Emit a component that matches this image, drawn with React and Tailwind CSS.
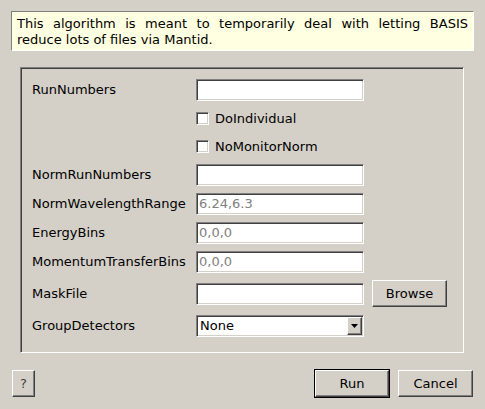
import React from "react";

const sunken =
  "border border-t-[#808080] border-l-[#808080] border-b-white border-r-white [box-shadow:inset_1px_1px_0_#404040,inset_-1px_-1px_0_#d4d0c8]";
const raised =
  "bg-[#d4d0c8] border border-t-white border-l-white border-b-[#404040] border-r-[#404040] [box-shadow:inset_-1px_-1px_0_#808080] flex items-center justify-center";

const Field = ({ value }) => (
  <div className={`h-[22px] w-[168px] bg-white pl-[2px] flex items-center text-[#808080] ${sunken}`}>
    {value}
  </div>
);

const Check = ({ label }) => (
  <div className="col-span-2 h-[21px] flex items-center">
    <div className={`w-[13px] h-[13px] bg-white ${sunken}`} />
    <span className="ml-[6px]">{label}</span>
  </div>
);

const Label = ({ children }) => <div className="h-[22px] flex items-center">{children}</div>;

const App = () => {
  return (
    <div className="w-[485px] h-[409px] bg-[#d4d0c8] pt-[11px] px-[11px] flex flex-col text-[13px] text-black font-['DejaVu_Sans',sans-serif]">
      <div className="w-[463px] h-[40px] bg-[#ffffe1] border border-t-[#808080] border-l-[#808080] border-b-white border-r-white px-[5px] pt-[4px] pb-[2px] leading-[16px] text-justify [text-align-last:left]">
        This algorithm is meant to temporarily deal with letting BASIS reduce lots of files via Mantid.
      </div>

      <div className="mt-[16px] ml-[9px] w-[444px] h-[286px] border border-t-[#808080] border-l-[#808080] border-b-white border-r-white [box-shadow:inset_1px_1px_0_#404040] pt-[11px] pl-[11px]">
        <div className="grid grid-cols-[164px_168px_auto] gap-y-[7px] items-center">
          <Label>RunNumbers</Label>
          <Field value="" />
          <div />
          <div />
          <Check label="DoIndividual" />
          <div />
          <Check label="NoMonitorNorm" />
          <Label>NormRunNumbers</Label>
          <Field value="" />
          <div />
          <Label>NormWavelengthRange</Label>
          <Field value="6.24,6.3" />
          <div />
          <Label>EnergyBins</Label>
          <Field value="0,0,0" />
          <div />
          <Label>MomentumTransferBins</Label>
          <Field value="0,0,0" />
          <div />
          <Label>MaskFile</Label>
          <Field value="" />
          <button className={`ml-[8px] w-[75px] h-[27px] ${raised}`}>Browse</button>
          <div className="mt-[1px]">
            <Label>GroupDetectors</Label>
          </div>
          <div className={`mt-[1px] h-[22px] w-[168px] bg-white flex items-center ${sunken}`}>
            <span className="flex-1 pl-[3px]">None</span>
            <div className={`w-[15px] h-[18px] mr-[1px] ${raised}`}>
              <svg width="7" height="4" viewBox="0 0 7 4">
                <path d="M0 0H7L3.5 4Z" fill="#000" />
              </svg>
            </div>
          </div>
          <div />
        </div>
      </div>

      <div className="mt-[16px] h-[29px] flex items-center px-[1px]">
        <button className={`w-[23px] h-[27px] text-[#404040] ${raised}`}>?</button>
        <div className="flex-1" />
        <div className="border border-black">
          <button className={`w-[74px] h-[27px] ${raised}`}>Run</button>
        </div>
        <button className={`ml-[8px] w-[75px] h-[27px] ${raised}`}>Cancel</button>
      </div>
    </div>
  );
};

export default App;
